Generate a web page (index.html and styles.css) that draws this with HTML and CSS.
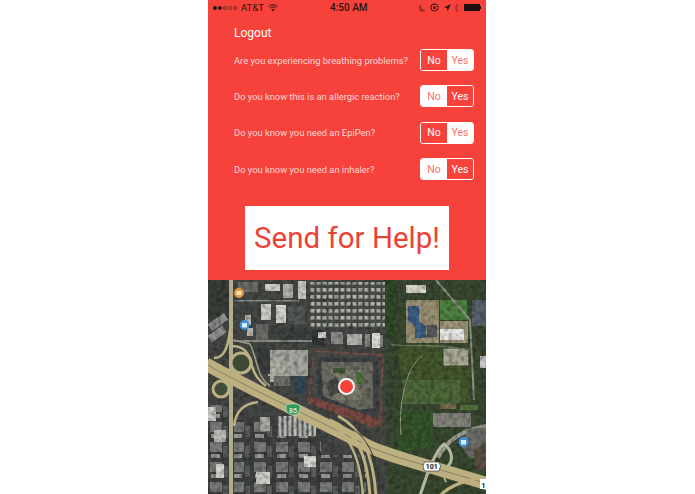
FILE: index.html
```html
<!DOCTYPE html>
<html lang="en">
<head>
    <meta charset="UTF-8">
    <meta name="viewport" content="width=device-width, initial-scale=1.0">
    <title>Send for Help</title>
    <link rel="stylesheet" href="styles.css">
</head>
<body>
    <div class="screen">
        <div class="panel">
            <div class="status">
                <div class="status-left">
                    <span class="dot on"></span><span class="dot on"></span><span class="dot"></span><span class="dot"></span><span class="dot"></span>
                    <span class="carrier">AT&amp;T</span>
                    <svg class="wifi" width="10" height="8" viewBox="0 0 10 8">
                        <path d="M0.5 2.6C3 .2 7 .2 9.5 2.6" fill="none" stroke="#2b1412" stroke-width="1"/>
                        <path d="M2 4.2C3.7 2.6 6.3 2.6 8 4.2" fill="none" stroke="#2b1412" stroke-width="1"/>
                        <path d="M3.4 5.6C4.4 4.8 5.6 4.8 6.6 5.6L5 7.6Z" fill="#2b1412"/>
                    </svg>
                </div>
                <div class="time">4:50 AM</div>
                <div class="status-right">
                    <svg width="7" height="8" viewBox="0 0 7 8"><path d="M2.6 .6A3.6 3.6 0 1 0 6.6 5.6 3.4 3.4 0 0 1 2.6 .6Z" fill="#9c3028"/></svg>
                    <svg width="9" height="9" viewBox="0 0 9 9"><circle cx="4.5" cy="4.5" r="3.6" fill="none" stroke="#2b1412" stroke-width="1"/><circle cx="4.5" cy="4.5" r="1.5" fill="#2b1412"/></svg>
                    <svg class="arrow" width="7" height="7" viewBox="0 0 7 7"><path d="M7 0 3.6 7 3 4 0 3.4Z" fill="#2b1412"/></svg>
                    <svg class="bt" width="5" height="10" viewBox="0 0 5 10"><path d="M0 2.6 4.2 7 2.4 9V1L4.2 3 0 7.4" fill="none" stroke="#9c3028" stroke-width=".8"/></svg>
                    <div class="battery"><div class="battery-cap"></div></div>
                </div>
            </div>

            <div class="content">
                <a class="logout">Logout</a>

                <div class="questions">
                    <div class="question">
                        <span>Are you experiencing breathing problems?</span>
                        <div class="toggle"><div class="seg">No</div><div class="seg picked">Yes</div></div>
                    </div>
                    <div class="question">
                        <span>Do you know this is an allergic reaction?</span>
                        <div class="toggle"><div class="seg picked">No</div><div class="seg">Yes</div></div>
                    </div>
                    <div class="question">
                        <span>Do you know you need an EpiPen?</span>
                        <div class="toggle"><div class="seg">No</div><div class="seg picked">Yes</div></div>
                    </div>
                    <div class="question">
                        <span>Do you know you need an inhaler?</span>
                        <div class="toggle"><div class="seg picked">No</div><div class="seg">Yes</div></div>
                    </div>
                </div>

                <button class="help" type="button">Send for Help!</button>
            </div>
        </div>

        <svg class="map" width="278" height="214" viewBox="0 0 278 214">
            <defs>
                <pattern id="cars" width="6" height="7" patternUnits="userSpaceOnUse">
                    <rect width="6" height="7" fill="#4b4f4b"/>
                    <rect x=".5" y="1" width="4" height="3.6" fill="#b4b5af"/>
                </pattern>
                <pattern id="sheds" width="5" height="18" patternUnits="userSpaceOnUse">
                    <rect width="5" height="18" fill="#5b5f5c"/>
                    <rect x=".5" width="3" height="18" fill="#bfc1bc"/>
                </pattern>
                <pattern id="town" width="22" height="20" patternUnits="userSpaceOnUse">
                    <rect width="22" height="20" fill="#3f4240"/>
                    <rect x="2" y="2" width="12" height="10" fill="#7a7d7a"/>
                    <rect x="15" y="6" width="5" height="11" fill="#5c5f5d"/>
                    <rect x="3" y="14" width="9" height="4" fill="#979894"/>
                </pattern>
                <filter id="soft"><feGaussianBlur stdDeviation=".7"/></filter>
                <filter id="grain" x="0" y="0" width="100%" height="100%">
                    <feTurbulence type="fractalNoise" baseFrequency=".22" numOctaves="2" seed="4"/>
                    <feColorMatrix values="0 0 0 0 0  0 0 0 0 0  0 0 0 0 0  .7 0 0 0 -.26"/>
                </filter>
            </defs>
            <g filter="url(#soft)">
                <rect x="-2" y="-2" width="282" height="218" fill="#454845"/>

                <!-- green land on the right -->
                <path d="M176 -2H280V216H180Z" fill="#3a4931"/>
                <path d="M190 70C215 58 240 65 262 88V122H196Z" fill="#44582f"/>
                <path d="M195 100H252V124H195Z" fill="#4f6a3a"/>
                <path d="M190 130H225V168L190 172Z" fill="#36552c"/>
                <path d="M232 20H259V40H232Z" fill="#4f8240"/>
                <path d="M252 125H270V130H252Z" fill="#55753d"/>
                <path d="M0 0H22V40H0Z" fill="#3a3e39"/>
                <path d="M180 -2H186V60H180Z" fill="#2f4a2a"/>

                <!-- west side blocks -->
                <rect x="0" y="38" width="20" height="8" fill="#8d908e" transform="rotate(-35 10 42)"/>
                <rect x="0" y="50" width="18" height="8" fill="#8d908e" transform="rotate(-35 9 54)"/>
                <rect x="30" y="2" width="20" height="10" fill="#6c6e68"/>
                <rect x="57" y="4" width="15" height="7" fill="#cfcfc9"/>
                <rect x="53" y="24" width="10" height="16" fill="#cfcfcb"/>
                <rect x="68" y="25" width="10" height="18" fill="#dcdcd8"/>
                <rect x="80" y="26" width="17" height="18" fill="#555855"/>
                <rect x="37" y="35" width="6" height="10" fill="#bfc0bb"/>
                <rect x="39" y="48" width="6" height="8" fill="#c6c7c2"/>
                <rect x="48" y="44" width="12" height="18" fill="#6b6d69"/>
                <rect x="70" y="48" width="30" height="16" fill="#3e423f"/>
                <rect x="75" y="4" width="10" height="14" fill="#b5b6b2"/>
                <rect x="90" y="1" width="8" height="18" fill="#c9c9c5"/>
                <rect x="26" y="20" width="65" height="1.5" fill="#8a8c86"/>
                <rect x="26" y="60" width="85" height="2" fill="#8a8c86"/>

                <!-- big lot left of the hotel -->
                <rect x="60" y="70" width="40" height="26" fill="#a9aaa2"/>
                <rect x="50" y="68" width="12" height="26" fill="#3b3f3d"/>
                <rect x="62" y="84" width="14" height="18" fill="#b4b4ac"/>
                <rect x="87" y="96" width="10" height="18" fill="#34485c"/>
                <rect x="66" y="96" width="16" height="10" fill="#6f716d"/>

                <!-- parking lots to the north -->
                <rect x="101" y="2" width="76" height="46" fill="url(#cars)"/>
                <rect x="104" y="50" width="12" height="15" fill="#33373a"/>
                <rect x="110" y="52" width="8" height="6" fill="#d0d0cc"/>
                <rect x="123" y="52" width="12" height="12" fill="#8a8c88"/>
                <rect x="139" y="54" width="15" height="11" fill="#b5b6b2"/>
                <rect x="157" y="54" width="5" height="13" fill="#8e908c"/>
                <rect x="164" y="53" width="8" height="15" fill="#e3e3de"/>
                <rect x="172" y="55" width="3" height="12" fill="#8e908c"/>

                <!-- hotel block -->
                <path d="M106 71 175 75 172 146 163 146 100 122Z" fill="#4a4c4b" stroke="#7a5047" stroke-width="1.4"/>
                <path d="M110 78H170V135L160 140 110 118Z" fill="#3f4347"/>
                <path d="M113 82H165V128L150 130 115 116Z" fill="#6b6c62"/>
                <rect x="123" y="90" width="30" height="30" fill="#7d7d6e"/>
                <rect x="148" y="92" width="8" height="12" fill="#507040"/>
                <rect x="125" y="88" width="12" height="5" fill="#3d5a35"/>
                <path d="M128 96 118 104 122 116 134 112Z" fill="#4a4c48"/>
                <path d="M100 122 163 146 172 146 174 140 160 135 104 117Z" fill="#7a4a42"/>

                <!-- lots on the right -->
                <rect x="198" y="20" width="33" height="43" fill="#9b9274"/>
                <path d="M200 26H211V41L218 46V58H207V46L200 41Z" fill="#3f6188"/>
                <rect x="219" y="45" width="10" height="12" fill="#585c5c"/>
                <rect x="232" y="41" width="28" height="22" fill="#a39a7d"/>
                <rect x="232" y="49" width="24" height="11" fill="#e8e8e4"/>
                <rect x="236" y="69" width="24" height="16" fill="#a8a592" stroke="#d0cfc0" stroke-width=".6"/>
                <rect x="198" y="5" width="20" height="8" fill="#d8d6cc"/>
                <rect x="225" y="133" width="38" height="14" fill="#85857d"/>
                <rect x="232" y="124" width="16" height="5" fill="#7a6d4f"/>
                <rect x="264" y="20" width="14" height="26" fill="#58636d"/>
                <rect x="272" y="76" width="6" height="12" fill="#c9c9c9"/>
                <path d="M228 0 262 40 266 120" fill="none" stroke="#8f9184" stroke-width="2"/>
                <path d="M182 64C200 68 220 62 262 70" fill="none" stroke="#6f7a5c" stroke-width="1.4"/>
                <path d="M193 155C190 120 200 85 214 76" fill="none" stroke="#9aa388" stroke-width="1"/>
                <path d="M230 178C238 160 255 150 278 146" fill="none" stroke="#a0a292" stroke-width="4"/>
                <path d="M252 165 262 148H278V178H262Z" fill="#6e706a"/>
                <path d="M265 170 278 162V190H268Z" fill="#5c5142"/>

                <!-- south blocks -->
                <rect x="70" y="136" width="38" height="20" fill="url(#sheds)"/>
                <rect x="68" y="156" width="45" height="58" fill="url(#town)"/>
                <rect x="26" y="140" width="42" height="74" fill="url(#town)"/>
                <rect x="0" y="125" width="22" height="89" fill="url(#town)"/>
                <rect x="113" y="175" width="45" height="39" fill="url(#town)"/>
                <rect x="52" y="137" width="10" height="14" fill="#aeaeaa"/>
                <rect x="6" y="150" width="12" height="12" fill="#bdbdb9"/>
                <rect x="8" y="184" width="8" height="14" fill="#d4d4d0"/>
                <rect x="96" y="176" width="12" height="11" fill="#d8d8d4"/>
                <rect x="48" y="192" width="14" height="12" fill="#cfcfcb"/>
                <rect x="0" y="127" width="8" height="14" fill="#d0d0cc"/>

                <rect x="-2" y="-2" width="282" height="218" filter="url(#grain)"/>

                <!-- frontage and vertical road -->
                <path d="M23 -2V216" fill="none" stroke="#b0ad8d" stroke-width="4"/>
                <path d="M25 60 42 64C50 80 48 96 62 106" fill="none" stroke="#9a9a86" stroke-width="1.6"/>

                <!-- interchange loops -->
                <circle cx="33" cy="83" r="10" fill="#3c4a33" stroke="#bbb083" stroke-width="3"/>
                <circle cx="13" cy="109" r="8" fill="#3f4d37" stroke="#bbb083" stroke-width="3"/>
                <path d="M6 78C16 78 20 68 22 50" fill="none" stroke="#bbb083" stroke-width="2.5"/>
                <path d="M24 66C38 66 42 76 44 86 46 94 50 100 58 106" fill="none" stroke="#bbb083" stroke-width="2.5"/>
                <path d="M26 146C28 130 36 124 50 122" fill="none" stroke="#bbb083" stroke-width="2.5"/>

                <!-- 85 / 101 highways -->
                <path d="M-2 84C40 108 110 140 160 166 180 176 215 184 280 204" fill="none" stroke="#bcb080" stroke-width="13"/>
                <path d="M-2 84C40 108 110 140 160 166 180 176 215 184 280 204" fill="none" stroke="#6f6c55" stroke-width=".7"/>
                <path d="M60 108C90 122 120 132 150 152" fill="none" stroke="#3d3f3c" stroke-width="1"/>
                <path d="M130 136C150 146 165 168 168 216" fill="none" stroke="#bcb080" stroke-width="3"/>
                <path d="M122 140C146 150 159 170 162 216" fill="none" stroke="#bcb080" stroke-width="3"/>
                <path d="M112 138C138 148 152 172 155 216" fill="none" stroke="#bcb080" stroke-width="2.5"/>
                <path d="M140 146C158 156 170 174 172 216" fill="none" stroke="#34362f" stroke-width="1"/>
                <path d="M212 216C220 190 228 170 236 164 244 170 246 180 240 186" fill="none" stroke="#b5b89a" stroke-width="3"/>
                <path d="M232 216C240 206 262 198 278 198" fill="none" stroke="#bcb080" stroke-width="3"/>
                <path d="M238 202C236 196 234 192 228 188" fill="none" stroke="#bcb080" stroke-width="2"/>
            </g>

            <!-- map markers -->
            <circle cx="31" cy="13" r="5" fill="#e8983c"/>
            <rect x="28.500" y="11" width="5" height="4" fill="#f7e0b8"/>
            <circle cx="36.500" cy="45" r="5" fill="#3f8fe0"/>
            <rect x="34" y="43" width="5" height="4.500" fill="#dcecfb"/>
            <circle cx="255.500" cy="162" r="5" fill="#3f8fe0"/>
            <rect x="253" y="160" width="5" height="4.500" fill="#dcecfb"/>
            <path d="M78 127C78 124 81 124 85 124S92 124 92 127C92 132 90 135 85 135S78 132 78 127Z" fill="#2f9a5f" stroke="#d4e8dc" stroke-width=".6"/>
            <text class="shield-green" x="85" y="132.500">85</text>
            <path d="M216.500 182H231L232.500 186 231 191H216.500L215 186Z" fill="#fff" stroke="#222" stroke-width=".6"/>
            <text class="shield-white" x="223.700" y="189">101</text>
            <rect x="272" y="199" width="6" height="10" fill="#fff"/>
            <text class="shield-white" x="275.500" y="207.500">1</text>

            <circle cx="138.500" cy="106.500" r="8.500" fill="#fff"/>
            <circle cx="138.500" cy="106.500" r="6.500" fill="#f6403a"/>
        </svg>
    </div>
</body>
</html>
```

FILE: styles.css
```css
body {
    margin: 0 0 0 208px;
    background-color: #fff;
    font-family: Roboto, "Liberation Sans", sans-serif;
}
.screen {
    width: 278px;
    height: 494px;
    overflow: hidden;
}
.panel {
    height: 280px;
    background-color: #f6423a;
}
.map {
    display: block;
}

.status {
    display: flex;
    justify-content: space-between;
    align-items: center;
    height: 15px;
    padding: 0 5px 0 5px;
    color: #2b1412;
    font-size: 9.5px;
    position: relative;
}
.status-left {
    display: flex;
    align-items: center;
    gap: 1px;
}
.dot {
    width: 4px;
    height: 4px;
    box-sizing: border-box;
    border: 1px solid #7c2b25;
    border-radius: 50%;
}
.dot.on {
    background-color: #2b1412;
    border-color: #2b1412;
}
.carrier {
    margin-left: 3px;
}
.wifi {
    margin-left: 3px;
}
.time {
    position: absolute;
    left: 122px;
    top: 0;
    line-height: 16px;
    font-size: 10px;
    font-weight: 500;
}
.status-right {
    display: flex;
    align-items: center;
    gap: 4px;
}
.arrow {
    margin-left: 1px;
}
.bt {
    margin-left: -1px;
}
.battery {
    position: relative;
    width: 16px;
    height: 7px;
    margin: 0 1px 0 1px;
    background-color: #1e0f0e;
    border-radius: 1px;
}
.battery-cap {
    position: absolute;
    right: -1px;
    top: 2px;
    width: 1px;
    height: 3px;
    background-color: #1e0f0e;
}

.content {
    padding: 10px 12px 0 26px;
}
.logout {
    display: block;
    margin-bottom: 8px;
    color: #fff;
    font-size: 12px;
    line-height: 16px;
}
.questions {
    display: flex;
    flex-direction: column;
    gap: 14.4px;
}
.question {
    display: flex;
    justify-content: space-between;
    align-items: center;
    color: #fdd8d4;
    font-size: 9.35px;
    white-space: nowrap;
}

.toggle {
    display: flex;
    width: 54px;
    height: 22px;
    box-sizing: border-box;
    border: 1px solid #fff;
    border-radius: 3px;
    overflow: hidden;
}
.seg {
    flex: 1;
    display: flex;
    align-items: center;
    justify-content: center;
    color: #fff;
    background-color: #f6423a;
    font-size: 10.5px;
}
.seg.picked {
    color: #f8736b;
    background-color: #fff;
}

.help {
    display: block;
    width: 204px;
    height: 64px;
    margin: 26px 0 0 11px;
    padding: 0;
    border: none;
    background-color: #fff;
    color: #ec4137;
    font-family: Roboto, "Liberation Sans", sans-serif;
    font-size: 29.5px;
    white-space: nowrap;
}

.shield-green {
    fill: #fff;
    font-family: Roboto, "Liberation Sans", sans-serif;
    font-size: 7px;
    text-anchor: middle;
}
.shield-white {
    fill: #111;
    font-family: Roboto, "Liberation Sans", sans-serif;
    font-size: 7px;
    font-weight: 700;
    text-anchor: middle;
}
```
